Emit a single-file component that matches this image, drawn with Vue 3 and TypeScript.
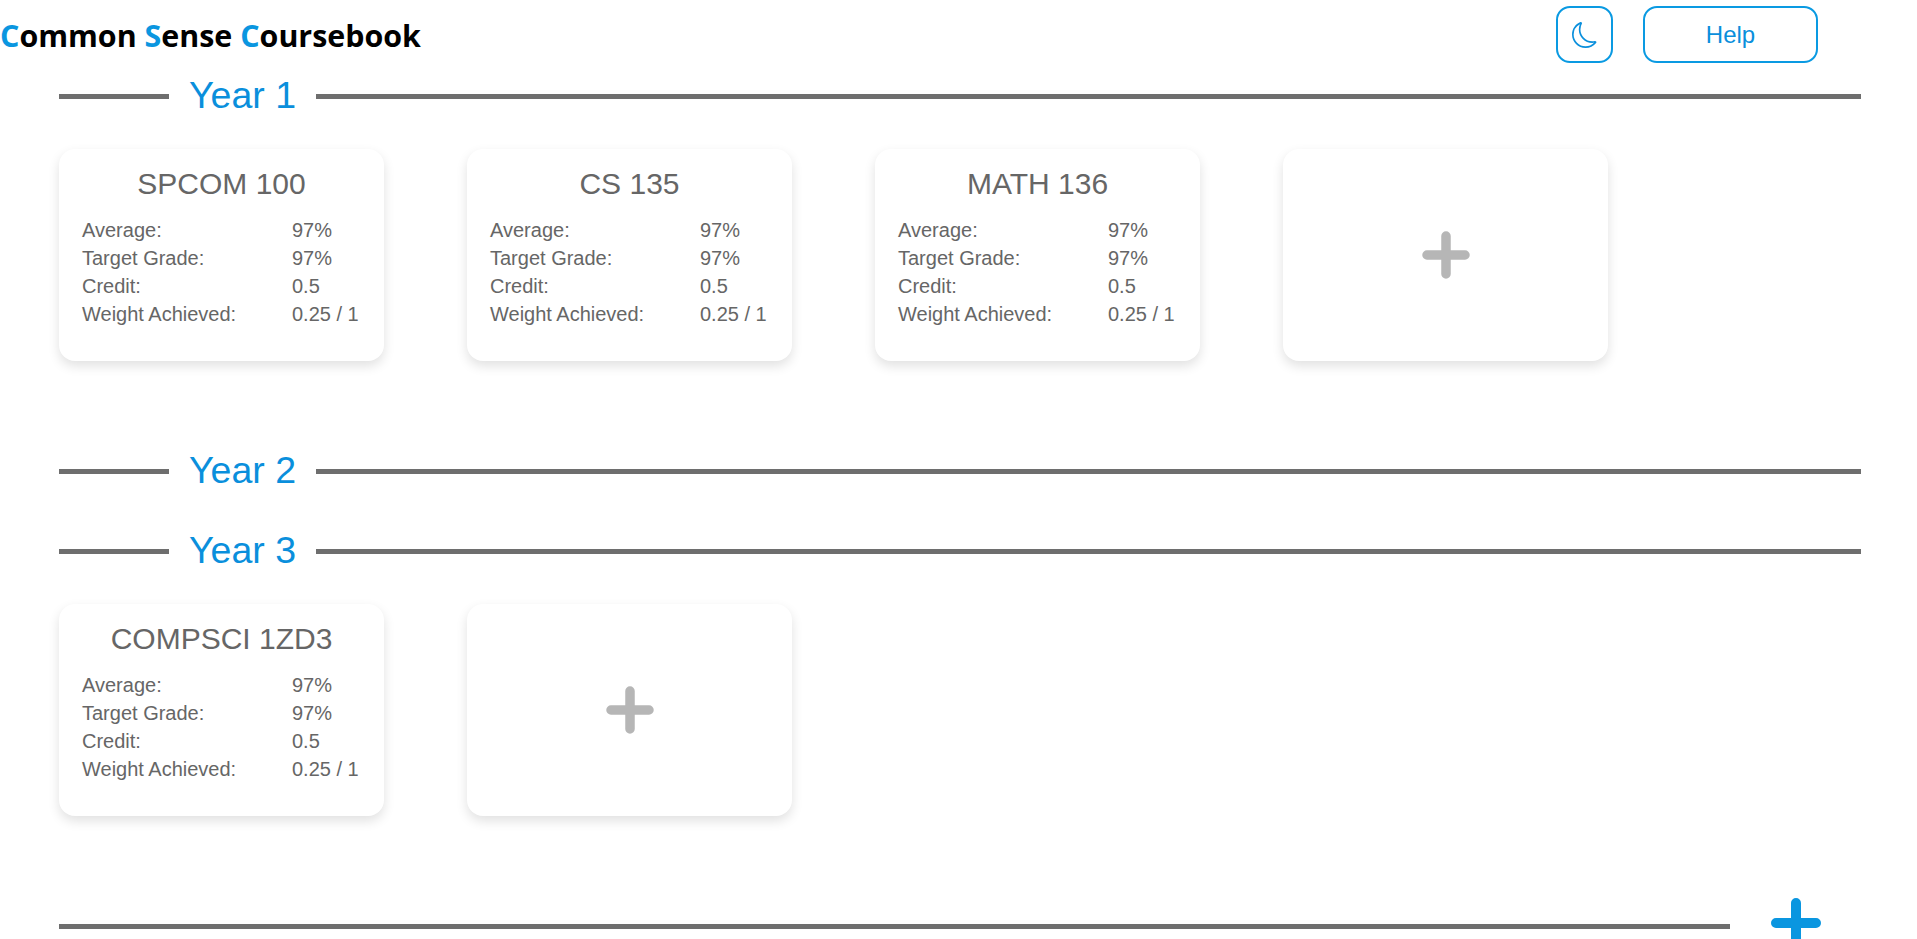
<script setup lang="ts">
import { ref } from "vue";

interface Course {
  name: string;
  average: string;
  target: string;
  credit: string;
  weight: string;
}

interface Year {
  title: string;
  courses: Course[];
}

function course(name: string): Course {
  return { name, average: "97%", target: "97%", credit: "0.5", weight: "0.25 / 1" };
}

const years = ref<Year[]>([
  { title: "Year 1", courses: [course("SPCOM 100"), course("CS 135"), course("MATH 136")] },
  { title: "Year 2", courses: [] },
  { title: "Year 3", courses: [course("COMPSCI 1ZD3")] },
]);
</script>

<template>
  <div class="page">
    <header class="top-bar">
      <h1 class="brand">
        <span class="accent">C</span>ommon <span class="accent">S</span>ense <span class="accent">C</span>oursebook
      </h1>
      <div class="top-actions">
        <button class="outline-btn theme-btn" aria-label="Toggle theme">
          <svg width="26" height="26" viewBox="0 0 16 16" fill="currentColor">
            <path d="M6 .278a.768.768 0 0 1 .08.858 7.208 7.208 0 0 0-.878 3.46c0 4.021 3.278 7.277 7.318 7.277.527 0 1.04-.055 1.533-.16a.787.787 0 0 1 .81.316.733.733 0 0 1-.031.893A8.349 8.349 0 0 1 8.344 16C3.734 16 0 12.286 0 7.71 0 4.266 2.114 1.312 5.124.06A.752.752 0 0 1 6 .278zM4.858 1.311A7.269 7.269 0 0 0 1.025 7.71c0 4.02 3.279 7.276 7.319 7.276a7.316 7.316 0 0 0 5.205-2.162c-.337.042-.68.063-1.029.063-4.61 0-8.343-3.714-8.343-8.29 0-1.167.242-2.278.681-3.286z" />
          </svg>
        </button>
        <button class="outline-btn help-btn">Help</button>
      </div>
    </header>

    <section v-for="year in years" :key="year.title" class="year">
      <div class="year-heading">
        <span class="rule rule-short"></span>
        <h2 class="year-title">{{ year.title }}</h2>
        <span class="rule rule-long"></span>
      </div>
      <div v-if="year.courses.length" class="cards">
        <article v-for="c in year.courses" :key="c.name" class="card">
          <h3 class="card-title">{{ c.name }}</h3>
          <dl class="stats">
            <dt>Average:</dt>
            <dd>{{ c.average }}</dd>
            <dt>Target Grade:</dt>
            <dd>{{ c.target }}</dd>
            <dt>Credit:</dt>
            <dd>{{ c.credit }}</dd>
            <dt>Weight Achieved:</dt>
            <dd>{{ c.weight }}</dd>
          </dl>
        </article>
        <button class="card add-card" aria-label="Add course">
          <svg width="48" height="48" viewBox="0 0 48 48">
            <path d="M24 5v38M5 24h38" stroke="#b6b6b6" stroke-width="9.5" stroke-linecap="round" />
          </svg>
        </button>
      </div>
    </section>

    <div class="add-year">
      <span class="rule rule-long"></span>
      <button class="add-year-btn" aria-label="Add year">
        <svg width="50" height="50" viewBox="0 0 50 50">
          <path d="M25 5v40M5 25h40" stroke="#0a96e0" stroke-width="10" stroke-linecap="round" />
        </svg>
      </button>
    </div>
  </div>
</template>

<style scoped>
.page {
  height: 939px;
  overflow: hidden;
  background: #fff;
  font-family: "Liberation Sans", Arial, sans-serif;
  color: #666;
}

.top-bar {
  display: flex;
  justify-content: space-between;
  height: 56px;
  padding: 6px 99px 0 0;
  box-sizing: border-box;
}

.brand {
  margin: 10px 0 0;
  font-family: "Open Sans", "Noto Sans", sans-serif;
  font-size: 30.4px;
  line-height: 40px;
  font-weight: 700;
  color: #000;
}

.accent {
  color: #0a96e0;
}

.top-actions {
  display: flex;
  gap: 30px;
}

.outline-btn {
  display: flex;
  align-items: center;
  justify-content: center;
  height: 57px;
  padding: 0;
  border: 2px solid #0a9ae2;
  border-radius: 14px;
  background: #fff;
  color: #0a8fdc;
  font-family: inherit;
  box-sizing: border-box;
}

.theme-btn {
  width: 57px;
}

.help-btn {
  width: 175px;
  font-size: 24px;
}

.year-heading {
  display: flex;
  align-items: center;
  height: 80px;
  padding: 0 56px 0 59px;
}

.rule {
  display: block;
  height: 5px;
  background: #6e6e6e;
}

.rule-short {
  width: 110px;
}

.rule-long {
  flex: 1;
}

.year-title {
  margin: 0 0 2px;
  padding: 0 20px;
  font-size: 37.5px;
  line-height: 44px;
  font-weight: 400;
  color: #0a8fdc;
}

.cards {
  display: flex;
  gap: 83px;
  padding: 13px 0 70px 59px;
}

.card {
  width: 325px;
  height: 212px;
  box-sizing: border-box;
  padding: 18px 23px 0;
  border: none;
  border-radius: 16px;
  background: #fff;
  box-shadow: 0 5px 12px rgba(0, 0, 0, 0.12);
}

.card-title {
  margin: 0 0 15px;
  font-size: 30px;
  line-height: 34px;
  font-weight: 400;
  text-align: center;
  white-space: nowrap;
}

.stats {
  display: grid;
  grid-template-columns: 210px 1fr;
  grid-auto-rows: 28px;
  margin: 0;
  font-size: 20px;
  line-height: 28px;
  white-space: nowrap;
}

.stats dd {
  margin: 0;
}

.add-card {
  display: flex;
  align-items: center;
  justify-content: center;
  padding: 0;
}

.add-year {
  display: flex;
  align-items: center;
  height: 50px;
  padding: 0 96px 0 59px;
  margin-top: 15px;
}

.add-year-btn {
  display: flex;
  margin-left: 41px;
  margin-bottom: 6px;
  padding: 0;
  border: none;
  background: none;
}
</style>

<style>
html,
body {
  margin: 0;
  overflow: hidden;
}
</style>
